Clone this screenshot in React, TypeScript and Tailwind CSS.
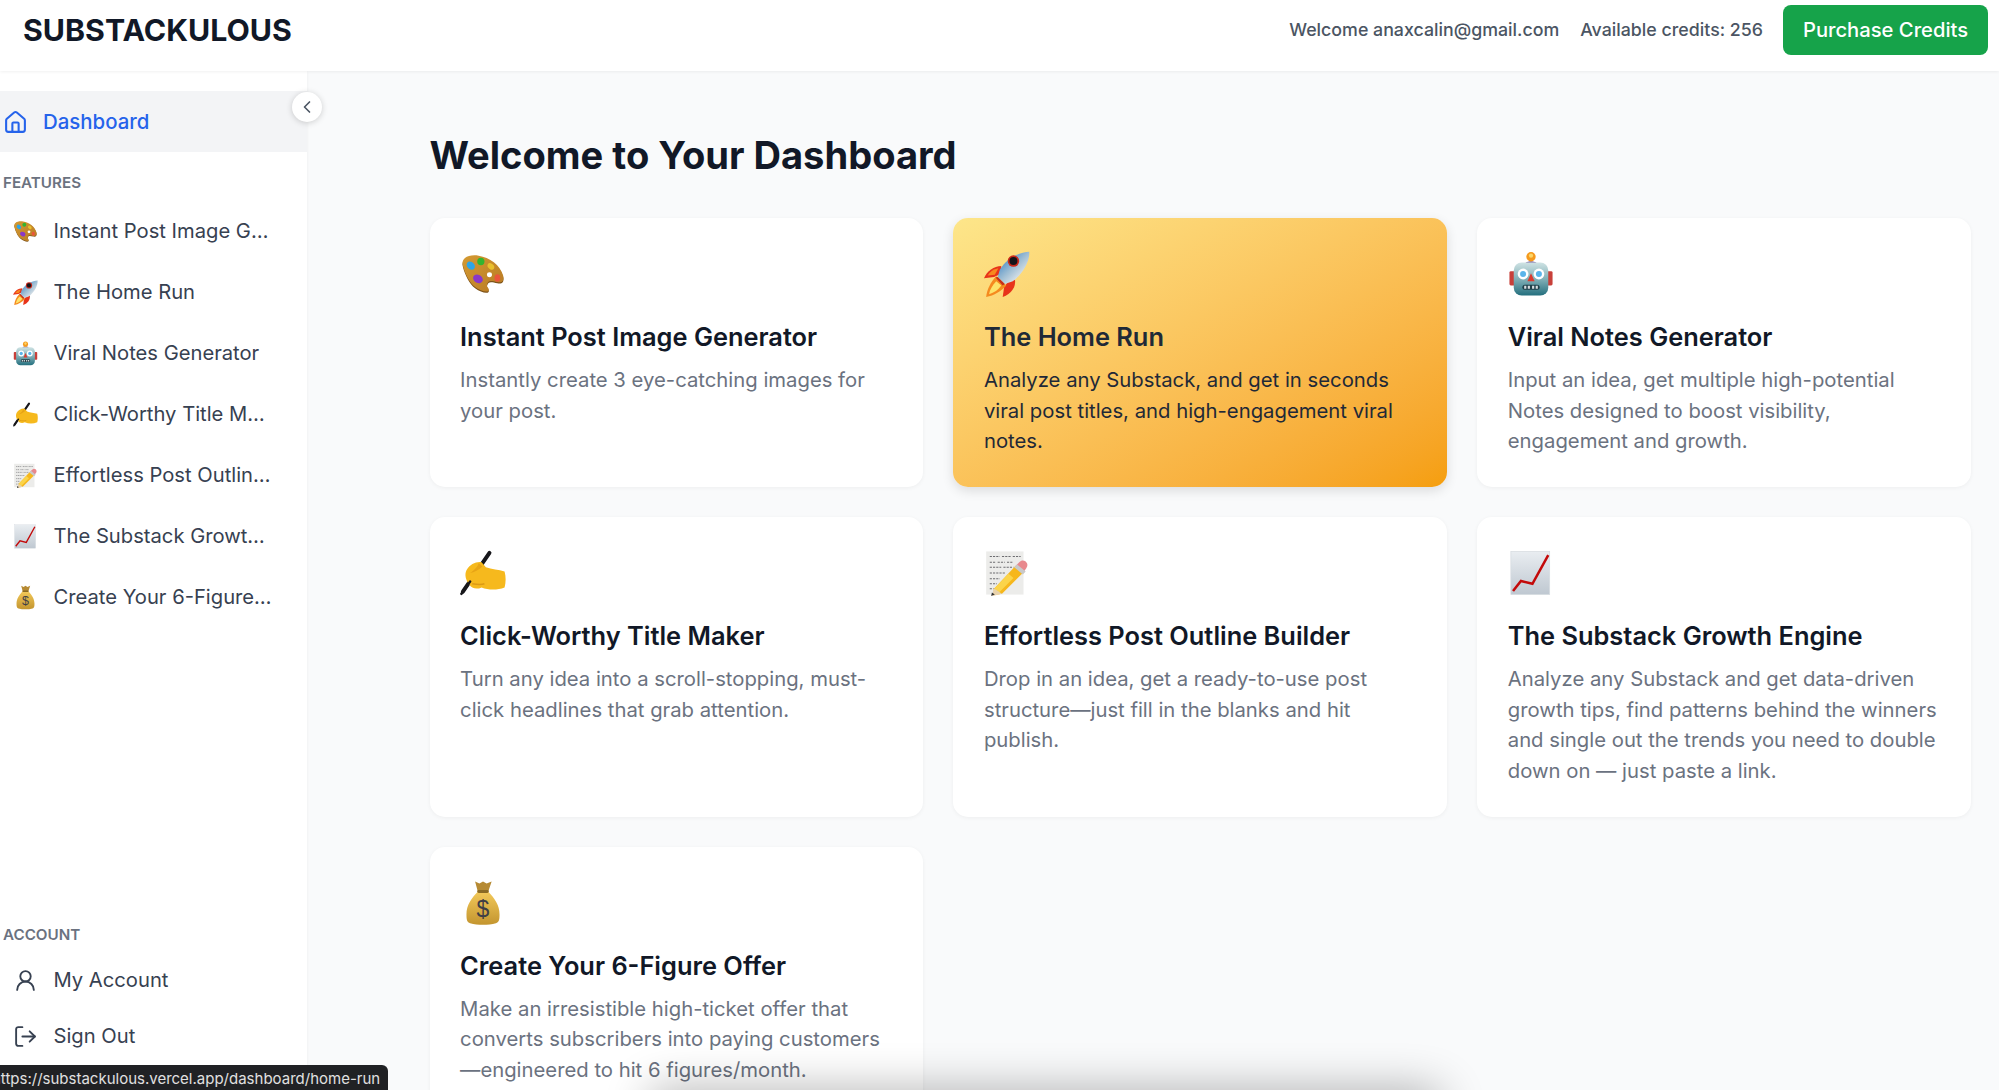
import { ChevronLeft, House, LogOut, UserRound } from 'lucide-react';

type IconProps = { className?: string };

function Palette({ className }: IconProps) {
  const outline = 'M4 22C1 13 12 8 26 10c15 2 30 11 34 24 2 7-2 9-8 8-7-1-12-3-14 2-2 4 3 5 2 8-2 3-11 1-19-4C13 43 7 32 4 22z';
  return (
    <svg viewBox="0 0 64 64" className={className}>
      <defs>
        <linearGradient id="wood" x1="0" y1="0" x2="1" y2="1">
          <stop offset="0" stopColor="#d49a32" />
          <stop offset="1" stopColor="#b87a24" />
        </linearGradient>
      </defs>
      <g transform="translate(0 -5) scale(1 1.15)">
        <path d={outline} fill="#7d5218" transform="translate(0 1.5)" />
        <path d={outline} fill="url(#wood)" />
        <ellipse cx="15" cy="22" rx="6" ry="4.5" fill="#2ea5e6" transform="rotate(35 15 22)" />
        <ellipse cx="29" cy="17" rx="5" ry="4.5" fill="#33b52f" />
        <ellipse cx="43" cy="23" rx="5" ry="3.5" fill="#e9c02e" transform="rotate(30 43 23)" />
        <ellipse cx="25" cy="38" rx="7" ry="5" fill="#8a38c8" transform="rotate(20 25 38)" />
        <ellipse cx="52" cy="37" rx="4" ry="4.5" fill="#e9553c" />
        <ellipse cx="41" cy="33" rx="3.5" ry="3" fill="#ffffff" />
      </g>
    </svg>
  );
}

function Rocket({ className }: IconProps) {
  return (
    <svg viewBox="0 0 64 64" className={className}>
      <defs>
        <linearGradient id="hull" x1="0.2" y1="0.1" x2="0.85" y2="0.8">
          <stop offset="0" stopColor="#3f86c6" />
          <stop offset="0.5" stopColor="#9dbdd4" />
          <stop offset="1" stopColor="#eeeeee" />
        </linearGradient>
      </defs>
      <path d="M24 21C14 21 4 28 0 38l14-2 9-4z" fill="#e8331a" />
      <path d="M43 39c2 11-5 21-17 25l2-14 5-7z" fill="#e8331a" />
      <path d="M20 24C13 25 8 29 5 34l10-1z" fill="#f7891e" />
      <path d="M17 35C9 43 4 54 3 64c11-2 21-8 28-16z" fill="#f58a1f" />
      <path d="M17 42C12 47 8 54 7 60c7-2 13-6 17-12z" fill="#fde36a" />
      <path d="M63 1C50 1 32 10 22 26l-3 10 10 10 11-4C54 32 64 14 63 1z" fill="url(#hull)" />
      <path d="M19 36l10 10-3 2-10-11z" fill="#c62f1a" />
      <circle cx="41" cy="14" r="8" fill="#c8281b" />
      <circle cx="41" cy="14" r="5.5" fill="#14141a" />
    </svg>
  );
}

function Robot({ className }: IconProps) {
  return (
    <svg viewBox="0 0 64 64" className={className}>
      <defs>
        <linearGradient id="robotHead" x1="0" y1="0" x2="0" y2="1">
          <stop offset="0" stopColor="#cfe3e4" />
          <stop offset="0.55" stopColor="#79aab2" />
          <stop offset="1" stopColor="#236f7e" />
        </linearGradient>
      </defs>
      <rect x="2" y="28" width="8" height="20" rx="2" fill="#c8403a" />
      <rect x="54" y="28" width="8" height="20" rx="2" fill="#c8403a" />
      <path d="M24 18c0-5 16-5 16 0z" fill="#7b6aa8" />
      <circle cx="32" cy="8" r="6.5" fill="#f59a1e" />
      <circle cx="32" cy="6.5" r="3" fill="#fcd667" />
      <rect x="8" y="16" width="48" height="46" rx="11" fill="url(#robotHead)" />
      <circle cx="21" cy="32" r="7.5" fill="#ffffff" />
      <circle cx="43" cy="32" r="7.5" fill="#ffffff" />
      <circle cx="21" cy="32" r="4.2" fill="#5ab4ea" />
      <circle cx="43" cy="32" r="4.2" fill="#5ab4ea" />
      <path d="M32 31l5 11H27z" fill="#dd3a2e" />
      <rect x="20" y="47" width="24" height="7" rx="3.5" fill="#1f3f48" />
      <path d="M24 48.5v4M29 48.5v4M35 48.5v4M40 48.5v4" stroke="#d5dde0" strokeWidth="3" />
    </svg>
  );
}

function WritingHand({ className }: IconProps) {
  return (
    <svg viewBox="0 0 64 64" className={className}>
      <path d="M41 4 4 58" stroke="#17171b" strokeWidth="5.5" strokeLinecap="round" />
      <path d="M9 28c5-8 13-12 21-11l6 7c8 3 18 3 26 6 2 7 2 15 0 22-10 4-22 4-32 0-6 3-14 2-17-4C8 42 6 34 9 28z" fill="#f6b91d" />
      <path d="M26 18c-1 5-6 10-12 14 6-1 12-4 17-9z" fill="#e7a416" />
      <path d="M17 47c6 1 12 2 17 0" stroke="#dc9a14" strokeWidth="2" fill="none" />
      <path d="M14 44 2 61" stroke="#17171b" strokeWidth="3.5" strokeLinecap="round" />
    </svg>
  );
}

function Memo({ className }: IconProps) {
  return (
    <svg viewBox="0 0 64 64" className={className}>
      <rect x="3" y="2" width="52" height="60" fill="#ececea" />
      <path d="M8 9h14M25 9h12M40 9h11M8 17h8M19 17h10M32 17h8M8 24h16M27 24h14M8 32h22M8 40h14M8 47h10M8 54h8" stroke="#6c6c70" strokeWidth="1.5" strokeDasharray="3 1.5" />
      <path d="M14 54 44 22l11 9-30 30-12 2z" fill="#f6b71c" />
      <path d="M14 54 34 33l7 6-21 21z" fill="#fbd44a" />
      <path d="M13 53l12 8-13 3z" fill="#e8d2ac" />
      <path d="M11 59l4 3-5 2z" fill="#333" />
      <path d="M44 22l5-5c3-3 6-3 9-1 3 3 3 6 1 9l-4 6z" fill="#e8898e" />
      <path d="M42 24l4-4 12 10-4 4z" fill="#c9c9c9" />
    </svg>
  );
}

function ChartUp({ className }: IconProps) {
  return (
    <svg viewBox="0 0 64 64" className={className}>
      <defs>
        <linearGradient id="chartBg" x1="0" y1="0" x2="0" y2="1">
          <stop offset="0" stopColor="#e9edf1" />
          <stop offset="1" stopColor="#bfc8d1" />
        </linearGradient>
      </defs>
      <rect x="4" y="2" width="54" height="60" fill="url(#chartBg)" stroke="#d6dbe0" />
      <path d="M7 57 18 43l16 4L56 7" fill="none" stroke="#c30a0a" strokeWidth="3.5" />
    </svg>
  );
}

function MoneyBag({ className }: IconProps) {
  return (
    <svg viewBox="0 0 64 64" className={className}>
      <defs>
        <linearGradient id="bag" x1="0" y1="0" x2="0" y2="1">
          <stop offset="0" stopColor="#f3c95a" />
          <stop offset="1" stopColor="#c3952f" />
        </linearGradient>
      </defs>
      <path d="M21 2l6 3 5-3 5 3 7-3-5 15H25z" fill="#b68a33" />
      <path d="M25 16C16 25 9 35 9 48c0 8 1 11 5 12 11 3 25 3 36 0 4-1 5-4 5-12 0-13-7-23-16-32z" fill="url(#bag)" />
      <rect x="24" y="14" width="16" height="4" rx="2" fill="#8a6a24" />
      <text x="32" y="51" textAnchor="middle" fontSize="32" fontFamily="Liberation Sans, sans-serif" fill="#3f3f46">$</text>
    </svg>
  );
}

const features = [
  {
    icon: Palette,
    title: 'Instant Post Image Generator',
    text: 'Instantly create 3 eye-catching images for your post.',
  },
  {
    icon: Rocket,
    title: 'The Home Run',
    text: 'Analyze any Substack, and get in seconds viral post titles, and high-engagement viral notes.',
    highlight: true,
  },
  {
    icon: Robot,
    title: 'Viral Notes Generator',
    text: 'Input an idea, get multiple high-potential Notes designed to boost visibility, engagement and growth.',
  },
  {
    icon: WritingHand,
    title: 'Click-Worthy Title Maker',
    text: 'Turn any idea into a scroll-stopping, must-click headlines that grab attention.',
  },
  {
    icon: Memo,
    title: 'Effortless Post Outline Builder',
    text: 'Drop in an idea, get a ready-to-use post structure—just fill in the blanks and hit publish.',
  },
  {
    icon: ChartUp,
    title: 'The Substack Growth Engine',
    text: 'Analyze any Substack and get data-driven growth tips, find patterns behind the winners and single out the trends you need to double down on — just paste a link.',
  },
  {
    icon: MoneyBag,
    title: 'Create Your 6-Figure Offer',
    text: 'Make an irresistible high-ticket offer that converts subscribers into paying customers —engineered to hit 6 figures/month.',
  },
];

function Sidebar() {
  return (
    <aside className="relative z-10 flex w-[307px] shrink-0 flex-col justify-between bg-white pt-5 pb-[26px] shadow-[0_1px_3px_rgba(0,0,0,0.06)]">
      <div>
        <div className="flex h-[61px] items-center gap-[15px] bg-[#f3f4f6] pt-[1px] pl-[3px] text-[20.4px] font-medium text-[#2563eb]">
          <House size={25} strokeWidth={2} />
          <span>Dashboard</span>
        </div>
        <button className="absolute top-[21px] -right-[15px] flex h-[30px] w-[30px] items-center justify-center rounded-full bg-white text-[#4b5563] shadow-[0_1px_6px_rgba(0,0,0,0.18)]">
          <ChevronLeft size={20} />
        </button>

        <p className="mt-[21px] mb-[8px] pl-[3px] text-[15.2px] leading-[20px] font-semibold text-[#6b7280] uppercase">
          Features
        </p>
        <nav>
          {features.map(({ icon: Icon, title }) => (
            <div key={title} className="flex h-[61px] items-center gap-[15.5px] pl-[13px] text-[20.2px] text-[#374151]">
              <Icon className="h-[25px] w-[25px] shrink-0" />
              <span className="w-[221px] truncate">{title}</span>
            </div>
          ))}
        </nav>
      </div>

      <div>
        <p className="mb-[7px] pl-[3px] text-[15.2px] leading-[20px] font-semibold text-[#6b7280] uppercase">
          Account
        </p>
        <div className="flex h-[56px] items-center gap-[15.5px] pl-[13px] text-[20.2px] text-[#374151]">
          <span className="flex w-[25px] justify-center">
            <UserRound size={25} strokeWidth={1.8} />
          </span>
          <span>My Account</span>
        </div>
        <div className="flex h-[56px] items-center gap-[15.5px] pl-[13px] text-[20.2px] text-[#374151]">
          <span className="flex w-[25px] justify-center">
            <LogOut size={25} strokeWidth={1.8} />
          </span>
          <span>Sign Out</span>
        </div>
      </div>
    </aside>
  );
}

export default function App() {
  return (
    <div className="relative flex h-screen flex-col overflow-hidden bg-[#f9fafb] font-['Inter',sans-serif]">
      {/* Top bar */}
      <header className="relative z-20 flex h-[71px] shrink-0 items-center justify-between bg-white pr-[11px] pl-[23px] shadow-[0_1px_3px_rgba(0,0,0,0.06)]">
        <h1 className="-mt-[10px] text-[30.3px] font-bold text-[#111827]">SUBSTACKULOUS</h1>
        <div className="-mt-[11px] flex items-center">
          <span className="text-[17.8px] font-medium text-[#4b5563]">Welcome anaxcalin@gmail.com</span>
          <span className="ml-[21px] text-[17.8px] font-medium text-[#4b5563]">Available credits: 256</span>
          <button className="ml-5 h-[50px] w-[205px] rounded-lg bg-[#16a34a] text-[20.2px] font-medium text-white">
            Purchase Credits
          </button>
        </div>
      </header>

      <div className="flex min-h-0 flex-1">
        <Sidebar />

        {/* Dashboard */}
        <main className="min-w-0 flex-1 pt-[61px] pr-[28px] pl-[122.5px]">
          <h2 className="mb-[40px] text-[38.1px] leading-[46px] font-bold text-[#111827]">
            Welcome to Your Dashboard
          </h2>
          <div className="grid grid-cols-3 gap-x-[30px] gap-y-[30px]">
            {features.map(({ icon: Icon, title, text, highlight }) => (
              <div
                key={title}
                className={
                  highlight
                    ? 'rounded-[15px] bg-gradient-to-br from-[#fde68a] to-[#f59e0b] px-[30.6px] pt-[31px] pb-[30.2px] shadow-[0_4px_12px_rgba(0,0,0,0.12)]'
                    : 'rounded-[15px] bg-white px-[30.6px] pt-[31px] pb-[30.2px] shadow-[0_1px_4px_rgba(0,0,0,0.05)]'
                }
              >
                <div className="mb-[10px] h-[60px]">
                  <Icon className="h-[46px] w-[46px] translate-y-[2px]" />
                </div>
                <h3 className={`mb-[10px] text-[25.4px] leading-[36px] font-semibold ${highlight ? 'text-[#1f2937]' : 'text-[#111827]'}`}>
                  {title}
                </h3>
                <p className={`text-[20.3px] leading-[30.6px] ${highlight ? 'text-[#1f2937]' : 'text-[#6b7280]'}`}>{text}</p>
              </div>
            ))}
          </div>
        </main>
      </div>

      {/* Shadow of the window below the capture */}
      <div className="absolute top-[1090px] left-[650px] z-30 h-10 w-[790px] rounded-lg shadow-[0_0_45px_rgba(0,0,0,0.32)]" />

      {/* Browser link preview */}
      <div className="absolute bottom-0 left-0 z-40 flex h-[25px] w-[388px] items-center overflow-hidden rounded-tr-md bg-[#202124] pt-[3px] text-[15px] whitespace-nowrap text-[#e0e0e0]">
        <span className="-ml-[8px]">https://substackulous.vercel.app/dashboard/home-run</span>
      </div>
    </div>
  );
}
